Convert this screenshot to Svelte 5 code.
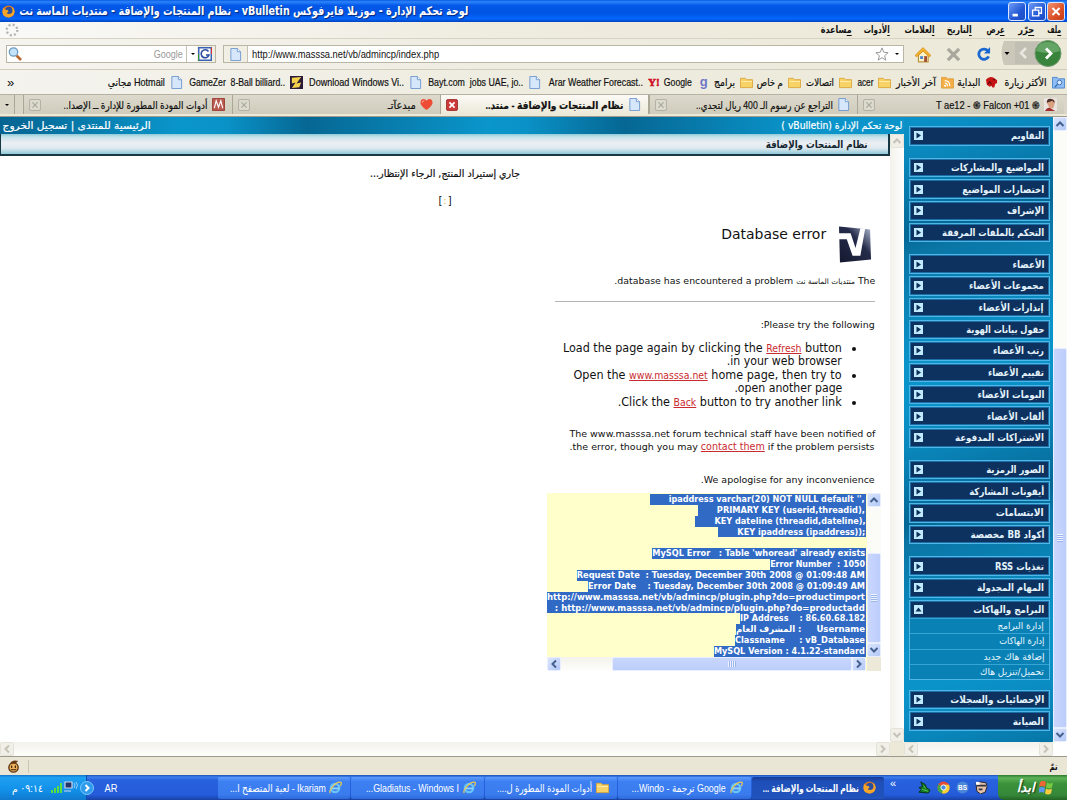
<script lang="ts">
	type Item = { text: string; icon: string; w: number; box?: number };

	const menus = [
		['م', 'لف', 14, 13], ['ح', 'رّر', 16, 13], ['ع', 'رض', 18, 15], ['ا', 'لتاريخ', 25, 13],
		['ا', 'لعلامات', 30, 14], ['ا', 'لأدوات', 26, 12], ['م', 'ساعدة', 31, 0]
	] as const;

	const bookmarks: Item[] = [
		{ text: 'الأكثر زيارة', icon: 'search-folder', w: 42, box: 67 },
		{ text: 'البداية', icon: 'red', w: 23, box: 44 },
		{ text: 'آخر الأخبار', icon: 'rss', w: 40, box: 63 },
		{ text: 'acer', icon: 'folder', w: 16, box: 39 },
		{ text: 'اتصالات', icon: 'folder', w: 28, box: 51 },
		{ text: 'م خاص', icon: 'folder', w: 26, box: 48 },
		{ text: 'برامج', icon: 'folder', w: 21, box: 43 },
		{ text: 'Google', icon: 'g', w: 28, box: 49 },
		{ text: 'Arar Weather Forecast..', icon: 'yahoo', w: 94, box: 120 },
		{ text: 'Bayt.com  jobs UAE, jo..', icon: 'doc', w: 95, box: 119 },
		{ text: 'Download Windows Vi..', icon: 'doc', w: 95, box: 119 },
		{ text: 'GameZer  8-Ball billiard..', icon: 'z', w: 96, box: 120 },
		{ text: 'Hotmail مجاني', icon: 'doc', w: 57, box: 80 }
	];

	const tabs: Item[] = [
		{ text: 'T ae12 - ֍ Falcon +01 ֍', icon: 'avatar', w: 104 },
		{ text: 'التراجع عن رسوم الـ 400 ريال لتجدي..', icon: 'doc', w: 137 },
		{ text: 'نظام المنتجات والإضافة - منتد..', icon: 'doc', w: 138 },
		{ text: 'مبدعآتـ', icon: 'heart', w: 28 },
		{ text: 'أدوات المودة المطورة للإدارة ــ الإصدا..', icon: 'm', w: 144 }
	];

	const groups: { text: string; w: number; sub?: [string, number][] }[][] = [
		[{ text: 'التقاويم', w: 33 }],
		[
			{ text: 'المواضيع والمشاركات', w: 93 },
			{ text: 'اختصارات المواضيع', w: 82 },
			{ text: 'الإشراف', w: 37 },
			{ text: 'التحكم بالملفات المرفقة', w: 102 }
		],
		[
			{ text: 'الأعضاء', w: 32 },
			{ text: 'مجموعات الأعضاء', w: 75 },
			{ text: 'إنذارات الأعضاء', w: 65 },
			{ text: 'حقول بيانات الهوية', w: 78 },
			{ text: 'رتب الأعضاء', w: 51 },
			{ text: 'تقييم الأعضاء', w: 56 },
			{ text: 'البومات الأعضاء', w: 67 },
			{ text: 'ألقاب الأعضاء', w: 57 },
			{ text: 'الاشتراكات المدفوعة', w: 89 }
		],
		[
			{ text: 'الصور الرمزية', w: 58 },
			{ text: 'أيقونات المشاركة', w: 75 },
			{ text: 'الابتسامات', w: 48 },
			{ text: 'أكواد BB مخصصة', w: 74 }
		],
		[
			{ text: 'تغذيات RSS', w: 49 },
			{ text: 'المهام المجدولة', w: 67 },
			{
				text: 'البرامج والهاكات', w: 71,
				sub: [['إدارة البرامج', 46], ['إدارة الهاكات', 45], ['إضافة هاك جديد', 61], ['تحميل/تنزيل هاك', 64]]
			}
		],
		[{ text: 'الإحصائيات والسجلات', w: 94 }, { text: 'الصيانة', w: 31 }]
	];

	// w: text width, pad: selected whitespace in front of it
	const errorLines = [
		{ text: "ipaddress varchar(20) NOT NULL default '',", w: 196, pad: 19 },
		{ text: 'PRIMARY KEY (userid,threadid),', w: 148, pad: 19 },
		{ text: 'KEY dateline (threadid,dateline),', w: 151, pad: 19 },
		{ text: 'KEY ipaddress (ipaddress));', w: 128, pad: 19 },
		{ text: '', w: 0, pad: 0 },
		{ text: "MySQL Error   : Table 'whoread' already exists", w: 213, pad: 0 },
		{ text: 'Error Number  : 1050', w: 95, pad: 0 },
		{ text: 'Request Date  : Tuesday, December 30th 2008 @ 01:09:48 AM', w: 288, pad: 0 },
		{ text: 'Error Date    : Tuesday, December 30th 2008 @ 01:09:49 AM', w: 277, pad: 0 },
		{ text: 'http://www.masssa.net/vb/admincp/plugin.php?do=productimport', w: 318, pad: 0 },
		{ text: ': http://www.masssa.net/vb/admincp/plugin.php?do=productadd', w: 310, pad: 8 },
		{ text: 'IP Address    : 86.60.68.182', w: 125, pad: 0 },
		{ text: 'Username     : المشرف العام', w: 129, pad: 0, rtl: true },
		{ text: 'Classname     : vB_Database', w: 130, pad: 0 },
		{ text: 'MySQL Version : 4.1.22-standard', w: 151, pad: 0 }
	];

	const tasks: Item[] = [
		{ text: 'نظام المنتجات والإضافة ...', icon: 'firefox', w: 96 },
		{ text: 'Google ترجمة - Windo...', icon: 'ie', w: 94 },
		{ text: 'أدوات المودة المطورة ل....', icon: 'folder', w: 95 },
		{ text: 'Gladiatus - Windows I...', icon: 'ie', w: 93 },
		{ text: 'Ikariam - لعبة المتصفح ا...', icon: 'ie', w: 96 }
	];

	const quick = ['face', 'bs', 'chrome', 'plane'];

	const dirOf = (text: string) => (/[\u0600-\u06ff]/.test(text) ? 'rtl' : 'ltr');

	// squeeze or stretch a label so it takes exactly `width` pixels
	function fit(node: HTMLElement, width: number) {
		const natural = node.getBoundingClientRect().width;
		if (!natural || !width) return;
		node.style.transform = `scaleX(${width / natural})`;
		node.style.marginLeft = `${width - natural}px`;
	}
</script>

{#snippet icon(name: string)}
	<svg class="icon" viewBox="0 0 14 14">
		{#if name === 'doc'}
			<path d="M2 .5h7l3.500 3.500v9.500H2z" fill="#d6e7fb" stroke="#6f97d0" />
			<path d="M9 .5V4h3.500" fill="#fff" stroke="#6f97d0" />
		{:else if name === 'folder'}
			<path d="M.5 12.500v-10h5l1.500 1.500h6.500v8.500z" fill="#f6d267" stroke="#dba63a" />
			<path d="M1 6h12" stroke="#fff0ae" />
		{:else if name === 'search-folder'}
			<path d="M.5 13V1.500h5L7 3h6.500v10z" fill="#8fbcf2" stroke="#4c86d2" />
			<circle cx="8" cy="7" r="2.500" fill="#dceaff" stroke="#3b6fb5" />
			<path d="m6 9-3 3" stroke="#3b6fb5" stroke-width="1.500" />
		{:else if name === 'rss'}
			<path d="M.5 13V1.500h5L7 3h6.500v10z" fill="#f4ae45" stroke="#dfa040" />
			<circle cx="4.500" cy="10.500" r="1.200" fill="#fff" />
			<path d="M4 7.500q3 0 3 3.500M4 5q5.500 0 5.500 6" fill="none" stroke="#fff" stroke-width="1.200" />
		{:else if name === 'red'}
			<path d="M1 4q3-4 8-2.500l4 3v3l-2 1-1 4H8l-1-2-2 1-3-2z" fill="#c51414" />
			<path d="m3 9 2-3 2 3M9 4h2" stroke="#400" fill="none" />
		{:else if name === 'g'}
			<text x="3" y="10.500" class="glyph-g">g</text>
		{:else if name === 'yahoo'}
			<text x="0" y="11" class="glyph-y">Y!</text>
		{:else if name === 'z'}
			<path d="M0 0h14v14H0z" fill="#2a1c38" />
			<path d="m2 2 10-1-5 7 5-1-2 5-8 1 4-6-4 1z" fill="#f5d24b" />
		{:else if name === 'avatar'}
			<path d="M0 0h14v14H0z" fill="#e9e4e0" />
			<path d="M3 5q0-4 4-4t5 3l-2 7H6z" fill="#d9a182" />
			<path d="M3 5q0-5 5-4 4 1 3 4L9 3z" fill="#4b3028" />
			<path d="M1 14q3-5 6-3l5 3z" fill="#a22c2c" />
		{:else if name === 'heart'}
			<path d="M7 13Q0 8 .5 4.500 1 1 4 1q2 0 3 2 1-2 3-2 3 0 3.500 3.500Q14 8 7 13z" fill="#ee4c35" />
			<path d="M2.500 5q0-2 2-2" stroke="#ffb5a5" fill="none" />
		{:else if name === 'm'}
			<path d="M.5.5h13v13H.5z" fill="#b85a50" stroke="#9c3b35" />
			<path d="m2.500 11 2-8 2.500 7 2.500-7 2 8" fill="none" stroke="#fff" stroke-width="1.200" />
		{:else if name === 'firefox'}
			<circle cx="7" cy="7" r="6.500" fill="#e57918" />
			<circle cx="7.500" cy="6" r="4" fill="#2b4f9c" />
			<path d="M1 3q2 3 5 2l1 2-2 2q3 2 6-1 1-3-1-6 4 2 3.500 6-1 5-6.500 5.500Q1 13 .5 8z" fill="#f6a52b" />
		{:else if name === 'ie'}
			<circle cx="6.500" cy="7.500" r="4.500" fill="none" stroke="#67c3f8" stroke-width="2.500" />
			<path d="M3 8h8" stroke="#8fd4fa" stroke-width="2" />
			<path d="M1.500 13q-2-2 3-7.500T13 1.500q1 1-1 4" fill="none" stroke="#ebca55" stroke-width="1.300" />
		{:else if name === 'chrome'}
			<circle cx="7" cy="7" r="6.500" fill="#e54b38" />
			<path d="m7 7-5.500-3.500Q-1 9 3 12.500l3 1z" fill="#42a647" />
			<path d="M7 4h6q2 7-4 9.500H5.500z" fill="#f8cf35" />
			<circle cx="7" cy="7" r="2.800" fill="#478de5" stroke="#fff" />
		{:else if name === 'bs'}
			<circle cx="7" cy="7" r="6.500" fill="#4c86d9" />
			<text x="2.200" y="9.500" class="glyph-bs">BS</text>
		{:else if name === 'plane'}
			<path d="m3 1 5 3 1 3 4 3-2 3-10-1 3-3-3-2 4-1z" fill="#147c24" stroke="#082f12" />
			<path d="m4 9 7 2M6 5l2 3" stroke="#64c653" />
		{:else if name === 'face'}
			<path d="m1 2 5-1 6 1 1 4-2 6-5 2-4-3z" fill="#e4c1ad" stroke="#222" />
			<path d="M2 5h10M4 9h4" stroke="#33333b" stroke-width="2" />
			<path d="M1 1h4v3H1z" fill="#fff" />
		{:else if name === 'monkey'}
			<circle cx="7" cy="8" r="5" fill="#eeb35a" stroke="#5d3410" stroke-width="1.500" />
			<path d="M3 4q3-5 9-3L9 4z" fill="#6b3b16" />
			<path d="M5 6v2.500M9 6v2.500M4 10.500h6" stroke="#3b1c08" stroke-width="1.200" />
		{:else if name === 'home'}
			<path d="M3 7v6h8.500V7L7 3z" fill="#fff3c8" stroke="#b99440" />
			<path d="M0 7.500 7 .5l7 7-1.500 1L7 3.500 1.500 8.500z" fill="#f8b42a" stroke="#cf8315" stroke-width=".6" />
			<path d="M8 8h2.500v5H8z" fill="#a44d33" />
			<path d="M4.500 8H7v2.500H4.500z" fill="#4e86ce" />
		{:else if name === 'close' || name === 'close-on'}
			<rect x=".5" y=".5" width="13" height="13" rx="2" fill={name === 'close' ? '#dcd9cd' : '#cb3939'} stroke={name === 'close' ? '#aaa89d' : '#982424'} />
			<path d="m4 4 6 6m0-6-6 6" stroke={name === 'close' ? '#aaa89d' : '#fff'} stroke-width={name === 'close' ? 1.3 : 2} />
		{/if}
	</svg>
{/snippet}

{#snippet arrow(dir: string)}
	<span class="sb-btn">
		<svg class="arrow {dir}" viewBox="0 0 10 10"><path d="m1.500 7 3.500-3.500L8.500 7" /></svg>
	</span>
{/snippet}

<div class="screen">
	<header class="titlebar">
		{@render icon('firefox')}
		<span class="title"><span class="t" use:fit={449}>لوحة تحكم الإدارة - موزيلا فايرفوكس vBulletin - نظام المنتجات والإضافة - منتديات الماسة نت</span></span>
		<div class="win-btns">
			<svg viewBox="0 0 18 18"><path d="M4 13h6" stroke="#fff" stroke-width="3" /></svg>
			<svg viewBox="0 0 18 18"><path d="M7 8V4.500h7V11h-3M4 7.500h7V14H4z" stroke="#fff" stroke-width="1.500" fill="none" /></svg>
			<svg class="x" viewBox="0 0 18 18"><path d="m5 5 8 8m0-8-8 8" stroke="#fff" stroke-width="2.200" /></svg>
		</div>
	</header>

	<nav class="menubar">
		{#each menus as [first, rest, w, gap]}
			<span class="menu" style="width: {w + gap}px"><span class="t" use:fit={w}><u>{first}</u>{rest}</span></span>
		{/each}
		<svg class="throbber" viewBox="0 0 14 14"><circle cx="7" cy="7" r="5.300" /></svg>
	</nav>

	<div class="toolbar">
		<div class="nav-btns">
			<svg viewBox="0 0 66 28">
				<path d="M4 1h46v24H4q-5-12 0-24z" fill="#cbc8ba" />
				<path d="M15 2h24v22H15z" fill="#bcbbb1" opacity=".7" />
				<path d="m4.500 12 2.500 3 2.500-3z" />
				<path d="m26 8-5 5 5 5" fill="none" stroke="#e9e7df" stroke-width="2.500" />
				<circle cx="48" cy="13.500" r="13" fill="#38843c" stroke="#739b70" />
				<path d="M36 11q2-9 12-9t12 9q-12 4-24 0z" fill="#7db77b" opacity=".65" />
				<path d="m46 8.500 5 5-5 5" fill="none" stroke="#fff" stroke-width="2.800" />
			</svg>
		</div>
		<svg class="tool" viewBox="0 0 16 16"><path d="M13 4.500A5.500 5.500 0 1 0 13.500 10" fill="none" stroke="#1b68d0" stroke-width="3" /><path d="M8.500 7h6.500V0z" fill="#1b68d0" /></svg>
		<svg class="tool" viewBox="0 0 16 16"><path d="m2 2 12 12m0-12L2 14" stroke="#aaa79f" stroke-width="3.500" /></svg>
		<span class="tool">{@render icon('home')}</span>
		<div class="url">
			<span class="drop"></span>
			<svg class="star" viewBox="0 0 16 16"><path d="m8 1 2 5 5 .5-4 3.500 1.300 5L8 12.200 3.700 15 5 10 1 6.500 6 6z" fill="#fff" stroke="#8b8b8b" /></svg>
			<span class="address"><span class="t" dir="ltr" use:fit={187}>http://www.masssa.net/vb/admincp/index.php</span></span>
			<span class="site">{@render icon('doc')}</span>
		</div>
		<div class="search">
			<span class="engine"><svg viewBox="0 0 14 14"><path d="M0 0h14v14H0z" fill="#3a62b5" /><path d="M1.500 1.500h11v11h-11z" fill="#fff" /><path d="M14 0v7h-1V1z" fill="#d33" /><path d="M0 14V7h1v6z" fill="#393" /><path d="M10.500 4.500A4 4 0 1 0 11 8H8" fill="none" stroke="#2b4d9d" stroke-width="1.600" /></svg></span>
			<span class="drop"></span>
			<span class="hint"><span class="t" use:fit={29}>Google</span></span>
			<svg class="glass" viewBox="0 0 14 14"><path d="m8.500 8.500 4.500 4.500" stroke="#ba692e" stroke-width="2.600" /><circle cx="5.500" cy="5" r="4.200" fill="#c3e4fb" stroke="#719cc1" stroke-width="1.300" /></svg>
		</div>
	</div>

	<div class="bookmarks">
		{#each bookmarks as b}
			<span class="bookmark" style="width: {b.box}px">
				{@render icon(b.icon)}<span class="t" dir={dirOf(b.text)} use:fit={b.w}>{b.text}</span>
			</span>
		{/each}
		<span class="more" dir="ltr">»</span>
	</div>

	<div class="tabs">
		{#each tabs as tab, i}
			<div class="tab" class:active={i === 2}>
				{@render icon(tab.icon)}
				<span class="t" dir={dirOf(tab.text)} use:fit={tab.w}>{tab.text}</span>
				<span class="close">{@render icon(i === 2 ? 'close-on' : 'close')}</span>
			</div>
		{/each}
		<span class="tab-list"><span class="drop"></span></span>
	</div>

	<div class="page">
		<div class="vbar side-scroll">
			{@render arrow('up')}
			<span class="thumb"></span>
			{@render arrow('down')}
		</div>
		<aside>
			<div class="sidebar">
				{#each groups as group}
					<div class="group">
						{#each group as item}
							<div class="nav-item">
								<div class="head">
									<span class="t" use:fit={item.w}>{item.text}</span>
									<svg viewBox="0 0 9 9"><path d="M0 0h9v9H0z" fill="#bfeaff" /><path d={item.sub ? 'M1.500 6.500h6l-3-4z' : 'M2.500 1.500 7 4.500l-4.500 3z'} fill="#0b2f58" /></svg>
								</div>
								{#each item.sub ?? [] as [text, w]}
									<div class="sub"><span class="t" use:fit={w}>{text}</span></div>
								{/each}
							</div>
						{/each}
					</div>
				{/each}
			</div>
			<div class="hbar off">
				{@render arrow('right')}
				<span class="track"></span>
				{@render arrow('left')}
			</div>
		</aside>

		<div class="frame">
			<div class="cp-head">
				<span class="t" use:fit={121}>لوحة تحكم الإدارة (vBulletin )</span>
				<span class="t cp-links" use:fit={148}>الرئيسية للمنتدى | تسجيل الخروج</span>
			</div>
			<div class="frame-row">
				<div class="vbar off">
					{@render arrow('up')}
					<span class="track"></span>
					{@render arrow('down')}
				</div>
				<main>
					<h1><span class="t" use:fit={102}>نظام المنتجات والإضافة</span></h1>
					<div class="wait"><span class="t" use:fit={150}>جاري إستيراد المنتج, الرجاء الإنتظار...</span></div>
					<div class="dots">[<i>:</i>]</div>
					<section class="error">
						<div class="brand">
							<svg viewBox="0 0 34 40">
								<defs>
									<linearGradient id="vb" x1="0" y1="1" x2="1" y2="0">
										<stop offset="0" stop-color="#15192f" />
										<stop offset=".6" stop-color="#252c4b" />
										<stop offset="1" stop-color="#b3bed4" />
									</linearGradient>
								</defs>
								<path d="m0 1 32 3 1 31-32 3z" fill="url(#vb)" />
								<path d="M0 8h12l5 15 5-20h5l-5 28h-8L8 14H0z" fill="#fff" />
							</svg>
							<span class="t" use:fit={105}>Database error</span>
						</div>
						<p class="lead"><span class="t" use:fit={261}>The <small>منتديات الماسة نت</small> database has encountered a problem.</span></p>
						<hr />
						<p class="try"><span class="t" use:fit={114}>Please try the following:</span></p>
						<ul>
							<li>
								<span class="t" use:fit={279}>Load the page again by clicking the <a href="#refresh">Refresh</a> button</span>
								<span class="t" use:fit={115}>in your web browser.</span>
							</li>
							<li>
								<span class="t" use:fit={268}>Open the <a href="#home">www.masssa.net</a> home page, then try to</span>
								<span class="t" use:fit={108}>open another page.</span>
							</li>
							<li><span class="t" use:fit={224}>Click the <a href="#back">Back</a> button to try another link.</span></li>
						</ul>
						<p class="notice">
							<span class="t" use:fit={306}>The www.masssa.net forum technical staff have been notified of</span>
							<span class="t" use:fit={305}>the error, though you may <a href="#contact">contact them</a> if the problem persists.</span>
						</p>
						<p class="sorry"><span class="t" use:fit={174}>We apologise for any inconvenience.</span></p>
					</section>
					<div class="textarea">
						<div class="vbar box-scroll">
							{@render arrow('up')}
							<span class="thumb"></span>
							{@render arrow('down')}
						</div>
						<pre>{#each errorLines as line}<span class="line">{#if line.text}<span class="sel" style="padding-left: {line.pad}px"><span class="t" dir={line.rtl ? 'rtl' : 'ltr'} use:fit={line.w}>{line.text}</span></span>{/if}</span>{/each}</pre>
						<span class="corner"></span>
						<div class="hbar box-hscroll">
							{@render arrow('right')}
							<span class="thumb"></span>
							<span class="track"></span>
							{@render arrow('left')}
						</div>
					</div>
				</main>
			</div>
			<div class="frame-foot">
				<span class="corner"></span>
				<div class="hbar off">
					{@render arrow('right')}
					<span class="track"></span>
					{@render arrow('left')}
				</div>
			</div>
		</div>
	</div>

	<div class="status">
		<span class="t" use:fit={8}>تمّ</span>
		<span class="addon">{@render icon('monkey')}</span>
	</div>

	<footer class="taskbar">
		<div class="start">
			<svg viewBox="0 0 15 15">
				<path d="M1 2q3-2 6 0L6 7q-3-2-6 0z" fill="#f06435" />
				<path d="M8 2.500q3 2 6 0l-1 5q-3 2-6 0z" fill="#7ac943" />
				<path d="M0 8q3-2 6 0l-1 5q-3-2-5 0z" fill="#5a98f0" />
				<path d="M7 8.500q3 2 6 0l-1 5q-3 2-6 0z" fill="#fbcc3d" />
			</svg>
			<span class="t" use:fit={18}>ابدأ</span>
		</div>
		<div class="quick">
			{#each quick as name}{@render icon(name)}{/each}
		</div>
		<span class="chev" dir="ltr">«</span>
		{#each tasks as task, i}
			<div class="task" class:pressed={i === 0}>
				{@render icon(task.icon)}<span class="t" use:fit={task.w}>{task.text}</span>
			</div>
		{/each}
		<span class="lang"><span class="t" use:fit={13}>AR</span></span>
		<div class="tray">
			<svg class="tray-btn" viewBox="0 0 14 14"><circle cx="7" cy="7" r="6.500" fill="#2f9bec" stroke="#7cc8fa" /><path d="m5.500 4 3 3-3 3" fill="none" stroke="#fff" stroke-width="2" /></svg>
			<svg class="net" viewBox="0 0 28 13">
				<path d="M0 12V9h2v3zM3 12V7h2v5zM6 12V5h2v7zM9 12V2h2v10z" fill="#59e03c" />
				<path d="M14 1h7v6h-7zM13 10h7" fill="#23346b" stroke="#ccd5ea" stroke-width="1.200" />
				<path d="M23 2q2 2 0 5M25 1q3 3 0 7" stroke="#b9dcff" fill="none" stroke-width=".8" />
			</svg>
			<span class="t" use:fit={31}>٠٩:١٤ م</span>
		</div>
	</footer>
</div>

<style>
	:global(body) {
		margin: 0;
	}

	.screen {
		width: 1067px;
		height: 800px;
		overflow: hidden;
		display: flex;
		flex-direction: column;
		direction: rtl;
		background: #ece9d8;
		font-family: 'Liberation Sans', 'DejaVu Sans', sans-serif;
		font-size: 10.5px;
		color: #111;
	}

	.t {
		display: inline-block;
		flex: none;
		white-space: pre;
		transform-origin: right center;
	}

	.icon {
		display: block;
		flex: none;
		width: 13px;
		height: 13px;
		direction: ltr;
	}

	.glyph-g {
		font: bold 14px 'Liberation Sans', sans-serif;
		fill: #6e77c8;
	}

	.glyph-y {
		font: bold 12px 'Liberation Serif', serif;
		fill: #d00d24;
		stroke: #d00d24;
		stroke-width: 0.6;
	}

	.glyph-bs {
		font: bold 7px 'Liberation Sans', sans-serif;
		fill: #fff;
	}

	.titlebar {
		display: flex;
		direction: ltr;
		align-items: center;
		height: 22px;
		padding: 0 2px;
		box-sizing: border-box;
		background: linear-gradient(#0a5be0, #2a84fb 8%, #0358e8 25%, #0054e4 60%, #0466fc 85%, #0244c0);
		color: #fff;
		font: bold 12px 'DejaVu Sans', sans-serif;
		text-shadow: 1px 1px 1px #06287a;
	}

	.title {
		direction: rtl;
		margin: 0 auto 0 4px;
		line-height: 20px;
	}

	.win-btns {
		display: flex;
		gap: 1.5px;
	}

	.win-btns svg {
		width: 16px;
		height: 17px;
		border: 1px solid #d8e6ff;
		border-radius: 3px;
		background: linear-gradient(135deg, #6f9cf5, #2257d5 60%, #1d4dc4);
	}

	.win-btns .x {
		background: linear-gradient(135deg, #ef9273, #dc5128 60%, #c43c18);
	}

	.menubar {
		display: flex;
		align-items: center;
		height: 16px;
		padding: 0 6px 0 5px;
		background: linear-gradient(90deg, #f9f9f7, #efece0 45%, #ece9d8);
		border-bottom: 1px solid #d6d3c4;
		font: bold 10px 'DejaVu Sans', sans-serif;
	}

	.menu {
		flex: none;
		line-height: 14px;
	}

	.menu u {
		text-underline-offset: 2px;
	}

	.throbber {
		width: 14px;
		height: 14px;
		margin-right: auto;
		fill: none;
		stroke: #b5b5b5;
		stroke-width: 2.4;
		stroke-dasharray: 2 2.16;
	}

	.toolbar {
		display: flex;
		align-items: center;
		height: 31px;
		box-sizing: border-box;
		padding: 0 5px 0 6px;
		background: linear-gradient(90deg, #f5f4ef, #efede2 45%, #ece9d8);
		border-bottom: 1px solid #d0cdbd;
	}

	.nav-btns {
		flex: none;
		width: 62px;
		height: 28px;
		direction: ltr;
	}

	.nav-btns svg {
		width: 66px;
		height: 28px;
	}

	.tool {
		flex: none;
		width: 15px;
		height: 15px;
		margin-right: 15px;
	}

	.nav-btns + .tool {
		margin-right: 9px;
	}

	.tool .icon {
		width: 16px;
		height: 16px;
	}

	.url,
	.search {
		display: flex;
		align-items: center;
		height: 18px;
		box-sizing: border-box;
		border: 1px solid #b9b6a6;
		background: #fff;
	}

	.url {
		width: 682px;
		margin-right: 12px;
		padding-right: 2px;
	}

	.star {
		width: 14px;
		height: 14px;
		margin-right: 4px;
	}

	.address {
		margin-right: auto;
		padding-left: 4px;
		direction: ltr;
		line-height: 16px;
	}

	.site {
		display: flex;
		align-items: center;
		justify-content: center;
		width: 23px;
		height: 16px;
		background: #f1efe4;
		border-right: 1px solid #c5c2b4;
	}

	.drop {
		width: 0;
		height: 0;
		margin: 0 2px;
		border: 2px solid transparent;
		border-top-color: #000;
		border-bottom-width: 0;
	}

	.search {
		width: 210px;
		margin-right: 7px;
		color: #999;
	}

	.engine {
		display: flex;
		padding: 0 3px 0 1px;
		height: 16px;
		align-items: center;
		background: #f0eee3;
	}

	.engine svg {
		width: 14px;
		height: 14px;
	}

	.hint {
		margin: 0 2px 0 auto;
		border-right: 1px solid #c5c2b4;
		padding-right: 3px;
		line-height: 16px;
	}

	.glass {
		width: 14px;
		height: 14px;
		margin-left: 1px;
	}

	.bookmarks {
		display: flex;
		align-items: center;
		height: 25px;
		box-sizing: border-box;
		padding: 0 2px 0 7px;
		background: linear-gradient(90deg, #f4f3ee, #efede1 45%, #ece9d8);
		border-bottom: 1px solid #b5b2a3;
	}

	.bookmark {
		display: flex;
		flex: none;
		align-items: center;
		gap: 5px;
		line-height: 14px;
		-webkit-text-stroke: 0.2px;
	}

	.bookmark .icon {
		-webkit-text-stroke: 0;
	}

	.more {
		margin-right: auto;
		font-size: 13px;
	}

	.tabs {
		display: flex;
		height: 21px;
		padding-right: 3px;
		background: linear-gradient(#d9d5c7 0 19px, #ece9d8 19px);
		border-bottom: 1px solid #9f9c8c;
	}

	.tab {
		display: flex;
		flex: none;
		align-items: center;
		gap: 4px;
		width: 208.5px;
		height: 19px;
		box-sizing: border-box;
		padding: 0 7px 0 5px;
		border-left: 1px solid #aaa797;
		background: linear-gradient(#ddd9cc, #cfccbc);
		-webkit-text-stroke: 0.2px;
	}

	.tab:first-child {
		width: 207px;
	}

	.tab.active {
		background: linear-gradient(#fbfaf6, #ece9d8);
		font-weight: bold;
		border-right: 1px solid #aaa797;
	}

	.close {
		margin-right: auto;
	}

	.close .icon {
		width: 12px;
		height: 12px;
	}

	.tab-list {
		display: flex;
		align-items: center;
		justify-content: center;
		width: 14px;
		height: 19px;
		margin-right: auto;
		border-right: 1px solid #aaa797;
	}

	.page {
		display: flex;
		height: 639px;
		flex: none;
		background: #fff;
	}

	.vbar {
		display: flex;
		flex: none;
		flex-direction: column;
		width: 14px;
		background: #fbfbf8;
	}

	.hbar {
		display: flex;
		height: 14px;
		background: #fbfbf8;
	}

	.track {
		flex: 1;
		background: linear-gradient(#f3f2ec, #fefefc);
	}

	.sb-btn {
		display: flex;
		flex: none;
		align-items: center;
		justify-content: center;
		width: 14px;
		height: 14px;
		box-sizing: border-box;
		border: 1px solid #e9effe;
		border-radius: 2px;
		background: linear-gradient(135deg, #dbe6ff, #b3c8f6);
	}

	.off .sb-btn {
		background: #f1f0e8;
		border-color: #e5e3d8;
	}

	.arrow {
		width: 10px;
		height: 10px;
		fill: none;
		stroke: #43608f;
		stroke-width: 2;
	}

	.off .arrow {
		stroke: #c5c3b6;
	}

	.down {
		transform: rotate(180deg);
	}

	.left {
		transform: rotate(-90deg);
	}

	.right {
		transform: rotate(90deg);
	}

	.vbar .track {
		background: linear-gradient(90deg, #f3f2ec, #fefefc);
	}

	.thumb {
		box-sizing: border-box;
		border: 1px solid #e6eeff;
		border-radius: 2px;
		background: repeating-linear-gradient(#eef4ff 0 1px, #9cb4ec 1px 2px) center / 6px 8px no-repeat, linear-gradient(90deg, #c9d7fe, #bccdfb);
	}

	.side-scroll {
		height: 625px;
	}

	.side-scroll .thumb {
		height: 380px;
		margin-top: auto;
	}

	aside {
		width: 149px;
		flex: none;
	}

	.sidebar {
		height: 625px;
		box-sizing: border-box;
		padding: 9px 3px 0 5px;
		background: repeating-linear-gradient(165deg, #0a93c9 0, #0a88bd 40px, #056794 115px, #0a76a6 135px, #0a94ca 240px, #0a93c9 280px);
	}

	.group {
		margin-bottom: 12.1px;
	}

	.group:nth-last-child(2) {
		margin-bottom: 10px;
	}

	.nav-item {
		margin-bottom: 2.1px;
		border: 1px solid #4fb6e6;
		background: #0a81b5;
	}

	.head {
		display: flex;
		align-items: center;
		justify-content: space-between;
		height: 17.6px;
		padding: 0 5px 0 4px;
		background: #0d325f;
		box-shadow: inset 0 0 0 1px #1b6ea6;
		color: #e4f2fb;
		font: bold 10px 'DejaVu Sans', sans-serif;
	}

	.head svg {
		width: 9px;
		height: 9px;
	}

	.sub {
		height: 14.1px;
		padding-right: 5px;
		border-top: 1px solid #36a5d6;
		color: #e8f7ff;
		font: 9.5px/14px 'DejaVu Sans', sans-serif;
	}

	.frame {
		flex: 1;
		display: flex;
		flex-direction: column;
	}

	.cp-head {
		display: flex;
		align-items: center;
		justify-content: space-between;
		height: 17px;
		padding: 0 2px 0 3px;
		background: linear-gradient(90deg, #056491, #0a96cb 20%, #0a92c7 25%, #066793 34%, #0a96cb 54%, #0a92c7 58%, #066793 69%, #0a94ca 88%, #0a94ca);
		color: #fff;
		font: 10px 'DejaVu Sans', sans-serif;
		-webkit-text-stroke: 0.2px;
	}

	.frame-row {
		display: flex;
		height: 608px;
	}

	main {
		flex: 1;
		background: #fff;
		font-family: 'DejaVu Sans', sans-serif;
	}

	h1 {
		height: 22px;
		box-sizing: border-box;
		margin: 0;
		padding-right: 20px;
		background: linear-gradient(#8fcbd9, #c7e3ea 15%, #eceff4 45%, #dfeaf0 70%, #8fc9d8);
		border: 0 solid #173744;
		border-width: 0 2px 2px 1px;
		font: bold 10.5px/20px 'DejaVu Sans', sans-serif;
		color: #142630;
	}

	.wait {
		margin-top: 11px;
		text-align: center;
		font: 10px/14px 'DejaVu Sans', sans-serif;
		-webkit-text-stroke: 0.2px;
	}

	.dots {
		margin-top: 13px;
		height: 14px;
		text-align: center;
		font-size: 10px;
		line-height: 14px;
	}

	.dots i {
		margin: 0 1px;
		color: #d8c440;
		font-style: normal;
	}

	.error {
		width: 320px;
		margin-right: 15px;
		font-size: 9.5px;
		line-height: 13px;
	}

	.brand {
		display: flex;
		gap: 13px;
		padding: 17px 3px 0 0;
		height: 40px;
		font-size: 14px;
		line-height: 19px;
	}

	.brand svg {
		width: 33px;
		height: 40px;
	}

	.error p {
		margin: 0;
		height: 13px;
	}

	.error .lead {
		margin-top: 9px;
	}

	.lead small {
		font-size: 7.5px;
	}

	hr {
		height: 1px;
		margin: 14px 0 16px;
		border: 0;
		background: #b5b5b5;
	}

	ul {
		margin: 11px 0 0;
		padding: 0 33px 0 0;
		font-size: 11.5px;
		line-height: 13.4px;
	}

	li .t,
	.notice .t {
		display: block;
		width: max-content;
	}

	a {
		color: #c92c30;
		font-size: 9.6px;
	}

	.error .notice {
		margin-top: 18px;
		height: 26px;
	}

	.error .sorry {
		margin-top: 20px;
	}

	.textarea {
		display: grid;
		grid-template-columns: 15px 319px;
		grid-template-rows: 164px 14px;
		width: 334px;
		margin: 7px 9px 0 0;
		background: #ffffcb;
	}

	.box-scroll .thumb {
		height: 90px;
		margin-top: auto;
	}

	pre {
		margin: 0;
		padding-top: 1px;
		overflow: hidden;
		direction: ltr;
		font: bold 9px/10.87px 'DejaVu Sans', sans-serif;
		color: #fff;
	}

	.line {
		display: flex;
		height: 10.87px;
		justify-content: flex-end;
	}

	.sel {
		padding-right: 1px;
		background: #316ac5;
	}

	.corner {
		width: 14px;
		background: #ece9d8;
	}

	.box-hscroll .thumb {
		width: 240px;
		background: repeating-linear-gradient(90deg, #eef4ff 0 1px, #9cb4ec 1px 2px) center / 8px 6px no-repeat, linear-gradient(#c9d7fe, #bccdfb);
	}

	.frame-foot {
		display: flex;
	}

	.frame-foot .hbar {
		flex: 1;
	}

	.status {
		display: flex;
		align-items: center;
		justify-content: space-between;
		height: 19px;
		flex: none;
		box-sizing: border-box;
		padding-right: 9px;
		border-top: 1px solid #9c9a8e;
		background: #e9e6d5;
		font: bold 10px 'DejaVu Sans', sans-serif;
	}

	.addon {
		width: 21px;
		padding-left: 7px;
		border-right: 1px solid #c9c6b5;
	}

	.addon .icon {
		margin-right: auto;
	}

	.taskbar {
		display: flex;
		height: 25px;
		flex: none;
		align-items: center;
		background: linear-gradient(#1f4fb5, #3c80ee 8%, #2862dd 20%, #245bd9 80%, #1941a5);
		color: #fff;
		font-size: 10.5px;
	}

	.start {
		display: flex;
		align-items: center;
		gap: 4px;
		width: 69px;
		height: 25px;
		box-sizing: border-box;
		padding-right: 13px;
		border-radius: 0 0 0 6px;
		background: linear-gradient(#2f7a30, #5cb257 12%, #3a9139 35%, #35883a 80%, #236424);
		font: italic bold 13px 'DejaVu Sans', sans-serif;
		text-shadow: 1px 1px 1px #123f14;
	}

	.start svg {
		width: 15px;
		height: 15px;
	}

	.quick {
		display: flex;
		gap: 6px;
		margin-right: 10px;
	}

	.chev {
		width: 8px;
		margin: -10px 20px 0 6px;
		font-size: 11px;
	}

	.task {
		display: flex;
		align-items: center;
		gap: 4px;
		width: 132.4px;
		height: 22px;
		flex: none;
		margin-left: 1px;
		box-sizing: border-box;
		padding-right: 8px;
		border-radius: 2px;
		background: linear-gradient(#5d9cfb, #3d80f2 20%, #3a7bee 80%, #2e69d8);
	}

	.task.pressed {
		background: linear-gradient(#163d96, #1e4fb8 20%, #2153bd);
		font-weight: bold;
	}

	.lang {
		margin: 0 99px 0 0;
	}

	.tray {
		display: flex;
		align-items: center;
		width: 87px;
		height: 25px;
		box-sizing: border-box;
		margin-right: auto;
		background: linear-gradient(#1275c8, #1ea0f2 10%, #1290e9 60%, #0f79cd);
		border-right: 1px solid #0a4fa8;
	}

	.tray-btn {
		width: 14px;
		height: 14px;
		margin-right: -8px;
	}

	.net {
		width: 28px;
		height: 13px;
		margin: 0 1px 0 8px;
	}
</style>
